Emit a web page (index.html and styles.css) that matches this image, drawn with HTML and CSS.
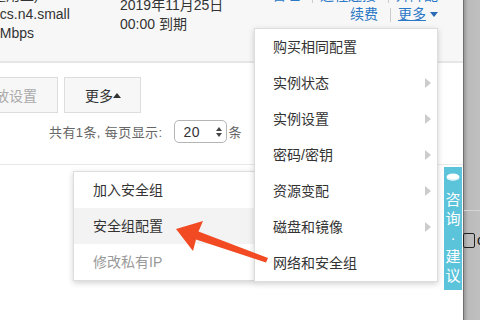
FILE: index.html
```html
<!DOCTYPE html>
<html lang="zh-CN">
<head>
    <meta charset="UTF-8">
    <title>实例列表 - 更多操作</title>
    <link rel="stylesheet" href="styles.css">
</head>
<body>

<div class="screen">
    <!-- Instance list page -->
    <div class="page">
        <div class="row">
            <div class="cell spec">
                <div>通用型)</div>
                <div>ecs.n4.small</div>
                <div>1Mbps</div>
            </div>
            <div class="cell expire">
                <div>2019年11月25日</div>
                <div>00:00 到期</div>
            </div>
            <div class="cell actions">
                <div class="links">
                    <a>管理</a><span class="sep"></span><a>远程连接</a><span class="sep"></span><a>升降配</a>
                </div>
                <div class="links">
                    <a>续费</a><span class="sep"></span><a class="more">更多</a><span class="caret"></span>
                </div>
            </div>
        </div>

        <div class="toolbar">
            <button class="btn btn-disabled">释放设置</button>
            <button class="btn btn-more">更多<span class="caret-up"></span></button>
        </div>

        <div class="pager">
            <span>共有1条, 每页显示:</span>
            <div class="select">
                <span>20</span>
                <span class="spin"><i class="up"></i><i class="down"></i></span>
            </div>
            <span>条</span>
        </div>

        <div class="divider"></div>
    </div>

    <!-- Window behind -->
    <div class="backdrop">
        <div class="bd-line"></div>
        <div class="bd-check"><span class="box"></span><span>c</span></div>
    </div>

    <!-- Submenu: 网络和安全组 -->
    <ul class="menu menu-sub">
        <li>加入安全组</li>
        <li class="hover">安全组配置</li>
        <li class="disabled">修改私有IP</li>
    </ul>

    <!-- Main dropdown -->
    <ul class="menu menu-main">
        <li>购买相同配置</li>
        <li class="has-sub">实例状态</li>
        <li class="has-sub">实例设置</li>
        <li class="has-sub">密码/密钥</li>
        <li class="has-sub">资源变配</li>
        <li class="has-sub">磁盘和镜像</li>
        <li>网络和安全组</li>
    </ul>

    <!-- Consult tab -->
    <div class="consult">
        <svg class="consult-icon" width="14" height="10" viewBox="0 0 14 10">
            <ellipse cx="7" cy="4" rx="6.5" ry="3.5" fill="#fff"/>
            <path d="M1 5.5 Q7 8.5 13 5.5" stroke="#d8f1f7" stroke-width="1.2" fill="none"/>
        </svg>
        <span>咨</span>
        <span>询</span>
        <span>·</span>
        <span>建</span>
        <span>议</span>
    </div>

    <!-- Annotation arrow -->
    <svg class="pointer" width="100" height="46" viewBox="170 218 100 46">
        <polygon points="176,229 203,221 198.5,231.5 268,258 266,262.5 196,239.5 193,251" fill="#f24a23"/>
    </svg>
</div>

</body>
</html>
```

FILE: styles.css
```css
/* Basic reset */
* {
    margin: 0;
    padding: 0;
    box-sizing: border-box;
}
body {
    font-family: "Liberation Sans", "Noto Sans CJK SC", sans-serif;
    font-size: 14px;
    color: #333;
    background-color: #fff;
}

.screen {
    position: relative;
    display: flex;
    width: 480px;
    height: 320px;
    overflow: hidden;
}

/* Page */
.page {
    flex: 0 0 463px;
    background-color: #fff;
}

/* Table row */
.row {
    display: flex;
    align-items: flex-start;
    height: 93px;
    margin-top: -30px;
    background-color: #f7f7f7;
    border-bottom: 2px solid #e6e6e6;
    line-height: 19px;
}
.spec {
    flex: 0 0 128px;
    margin-left: -8px;
    padding-top: 16px;
}
.expire {
    flex: 1;
    padding-top: 26px;
}
.actions {
    padding-top: 16px;
    padding-right: 25px;
    text-align: right;
}
.links {
    display: flex;
    align-items: center;
    justify-content: flex-end;
}
.links a {
    color: #2a78c6;
}
.links .sep {
    width: 1px;
    height: 14px;
    margin: 0 7px 0 12px;
    background-color: #ccc;
}
.links .more {
    text-decoration: underline;
}
.caret {
    width: 0;
    height: 0;
    margin-left: 4px;
    border-left: 4px solid transparent;
    border-right: 4px solid transparent;
    border-top: 5px solid #2a6bb5;
}

/* Buttons */
.toolbar {
    display: flex;
    gap: 6px;
    margin: 14px 0 0 -40px;
}
.btn {
    height: 36px;
    padding: 0 20px;
    font-family: inherit;
    font-size: 14px;
    color: #333;
    background-color: #f7f7f7;
    border: 1px solid #ddd;
    display: flex;
    align-items: center;
}
.btn-disabled {
    color: #aaa;
}
.btn-more {
    padding: 0 19px 0 20px;
}
.caret-up {
    width: 0;
    height: 0;
    border-left: 4px solid transparent;
    border-right: 4px solid transparent;
    border-bottom: 5px solid #333;
}

/* Pagination */
.pager {
    display: flex;
    align-items: center;
    height: 23px;
    margin-top: 7px;
    padding-left: 49px;
    font-size: 13px;
    color: #666;
    letter-spacing: 0.4px;
}
.select {
    display: flex;
    align-items: center;
    justify-content: space-between;
    width: 53px;
    height: 23px;
    margin: 0 1px 0 12px;
    padding: 0 4px 0 8px;
    border: 1px solid #b5b5b5;
    border-radius: 5px;
    font-size: 14px;
    color: #333;
}
.spin {
    display: flex;
    flex-direction: column;
    gap: 2px;
}
.spin i {
    width: 0;
    height: 0;
    border-left: 3px solid transparent;
    border-right: 3px solid transparent;
}
.spin .up {
    border-bottom: 4px solid #444;
}
.spin .down {
    border-top: 4px solid #444;
}

.divider {
    height: 1px;
    margin-top: 21px;
    background-color: #e8e8e8;
}

/* Window behind */
.backdrop {
    flex: 1;
    padding-top: 210px;
    background: linear-gradient(90deg, #9a9a9a 0, #bababa 4px, #c2c2c2 100%);
    border-left: 1px solid #6f6f6f;
}
.bd-line {
    height: 1px;
    background-color: #d4d4d4;
}
.bd-check {
    display: flex;
    align-items: center;
    margin: 21px 0 0 -1px;
    font-size: 14px;
    color: #111;
}
.bd-check .box {
    width: 12px;
    height: 15px;
    margin-right: 2px;
    border: 1.5px solid #222;
    border-radius: 2px;
}

/* Dropdown menus */
.menu {
    position: absolute;
    list-style: none;
    background-color: #fff;
    border: 1px solid #ddd;
    box-shadow: 0 2px 6px rgba(0, 0, 0, 0.18);
}
.menu li {
    position: relative;
    height: 36px;
    line-height: 36px;
    color: #333;
}
.menu-main {
    left: 254px;
    top: 28px;
    width: 184px;
    z-index: 3;
}
.menu-main li {
    padding-left: 18px;
}
.menu-main li.has-sub::after {
    content: "";
    position: absolute;
    right: 6px;
    top: 13px;
    border-left: 6px solid #ccc;
    border-top: 5px solid transparent;
    border-bottom: 5px solid transparent;
}
.menu-sub {
    left: 73px;
    top: 171px;
    width: 182px;
    z-index: 2;
}
.menu-sub li {
    padding-left: 19px;
}
.menu-sub li.hover {
    background-color: #f3f3f3;
}
.menu-sub li.disabled {
    color: #999;
}

/* Consult tab */
.consult {
    position: absolute;
    left: 444px;
    top: 167px;
    width: 18px;
    height: 123px;
    display: flex;
    flex-direction: column;
    align-items: center;
    padding-top: 6px;
    background-color: #5bc3da;
    color: #fff;
    font-size: 15px;
    line-height: 19px;
    z-index: 4;
}
.consult-icon {
    margin-bottom: 7px;
}

/* Annotation arrow */
.pointer {
    position: absolute;
    left: 170px;
    top: 218px;
    z-index: 5;
}
```
